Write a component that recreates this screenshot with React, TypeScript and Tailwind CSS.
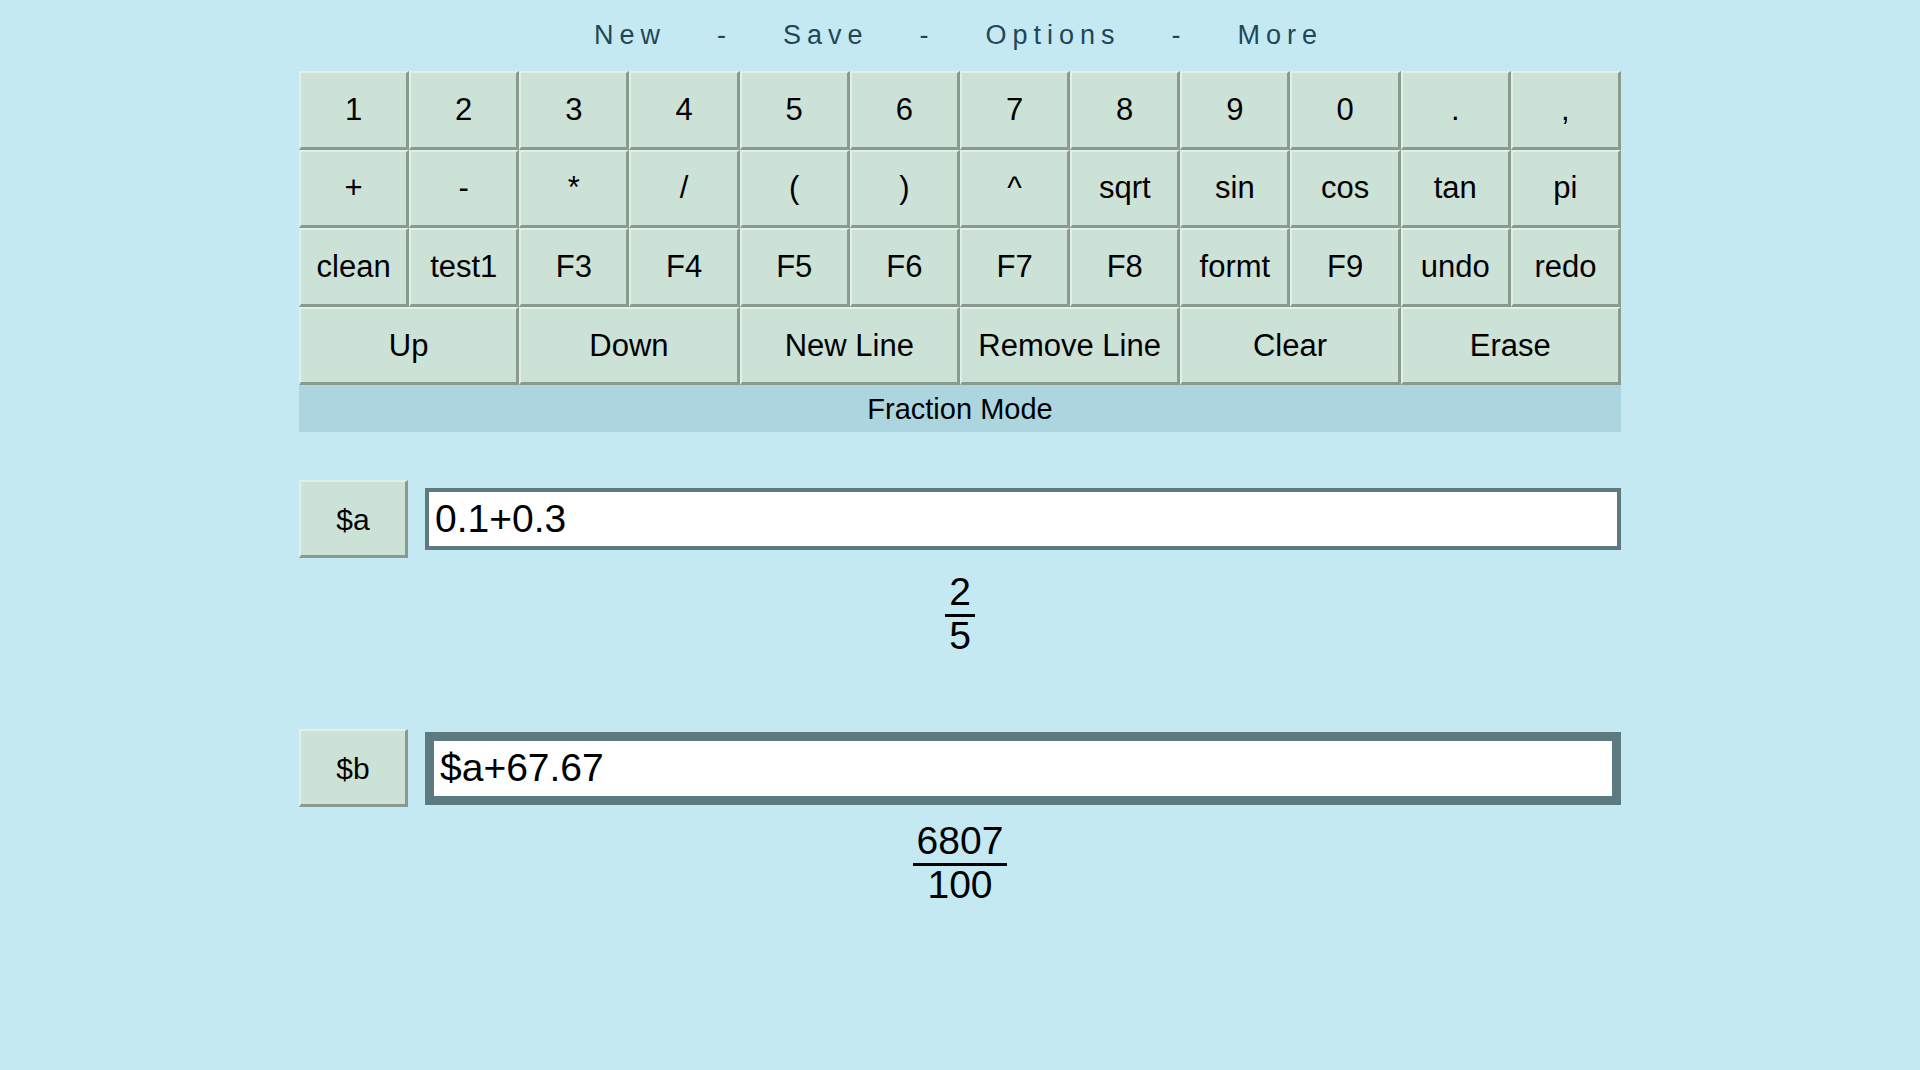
import * as React from "react";

const menuItems = ["New", "Save", "Options", "More"];

const keyRows: string[][] = [
  ["1", "2", "3", "4", "5", "6", "7", "8", "9", "0", ".", ","],
  ["+", "-", "*", "/", "(", ")", "^", "sqrt", "sin", "cos", "tan", "pi"],
  ["clean", "test1", "F3", "F4", "F5", "F6", "F7", "F8", "formt", "F9", "undo", "redo"],
];

const wideKeys = ["Up", "Down", "New Line", "Remove Line", "Clear", "Erase"];

const lines = [
  { name: "$a", expr: "0.1+0.3", num: "2", den: "5", focused: false },
  { name: "$b", expr: "$a+67.67", num: "6807", den: "100", focused: true },
];

// raised, bevelled key look shared by the keypad and the variable labels
const keyClass =
  "flex items-center justify-center bg-[#cce2d7] border-t-2 border-l-2 border-t-[#e2efe9] border-l-[#e2efe9] border-r-[3px] border-b-[3px] border-r-[#899b8f] border-b-[#899b8f] text-black whitespace-nowrap";

function Key({ label, wide }: { label: string; wide?: boolean }) {
  return (
    <button className={`${keyClass} h-[78.5px] text-[31px] ${wide ? "col-span-2 pt-[2px]" : ""}`}>
      {label}
    </button>
  );
}

function Fraction({ num, den }: { num: string; den: string }) {
  return (
    <div className="flex justify-center mt-[16px]">
      <div className="flex flex-col items-center text-[39px] leading-[36px] text-black">
        <span className="px-[4px]">{num}</span>
        <div className="w-full h-[3px] mt-[4px] bg-black" />
        <span className="px-[4px] mt-[1px]">{den}</span>
      </div>
    </div>
  );
}

function ExprLine({
  name,
  expr,
  num,
  den,
  focused,
  first,
}: {
  name: string;
  expr: string;
  num: string;
  den: string;
  focused: boolean;
  first: boolean;
}) {
  return (
    <div className={first ? "mt-[48px]" : "mt-[75px]"}>
      <div className="flex items-center">
        <button className={`${keyClass} w-[109px] h-[78px] text-[30px] pt-[2px] shrink-0`}>{name}</button>
        <input
          readOnly
          value={expr}
          className={`ml-[17px] flex-1 min-w-0 bg-white border-[#5b7b80] pl-[6px] text-[39px] text-black outline-none ${
            focused ? "h-[73px] border-[9px]" : "h-[62px] border-4"
          }`}
        />
      </div>
      <Fraction num={num} den={den} />
    </div>
  );
}

export default function App() {
  return (
    <div className="min-h-screen bg-[#c5e9f3] font-['Liberation_Sans',Arial,sans-serif]">
      {/* top menu */}
      <nav className="flex justify-center gap-[51px] pt-[20px] pr-[3px] text-[27px] leading-[31px] tracking-[6px] text-[#1f4757]">
        {menuItems.map((item, i) => (
          <React.Fragment key={item}>
            {i > 0 && <span>-</span>}
            <span className="cursor-pointer">{item}</span>
          </React.Fragment>
        ))}
      </nav>

      <div className="w-[1322px] mx-auto mt-[20px] pb-[40px]">
        {/* keypad */}
        <div className="grid grid-cols-12">
          {keyRows.map((row) => row.map((k) => <Key key={k} label={k} />))}
          {wideKeys.map((k) => (
            <Key key={k} label={k} wide />
          ))}
        </div>
        <div className="h-[47px] flex items-center justify-center pt-[2px] bg-[#acd5df] text-[29px] text-black">
          Fraction Mode
        </div>

        {lines.map((l, i) => (
          <ExprLine key={l.name} {...l} first={i === 0} />
        ))}
      </div>
    </div>
  );
}
